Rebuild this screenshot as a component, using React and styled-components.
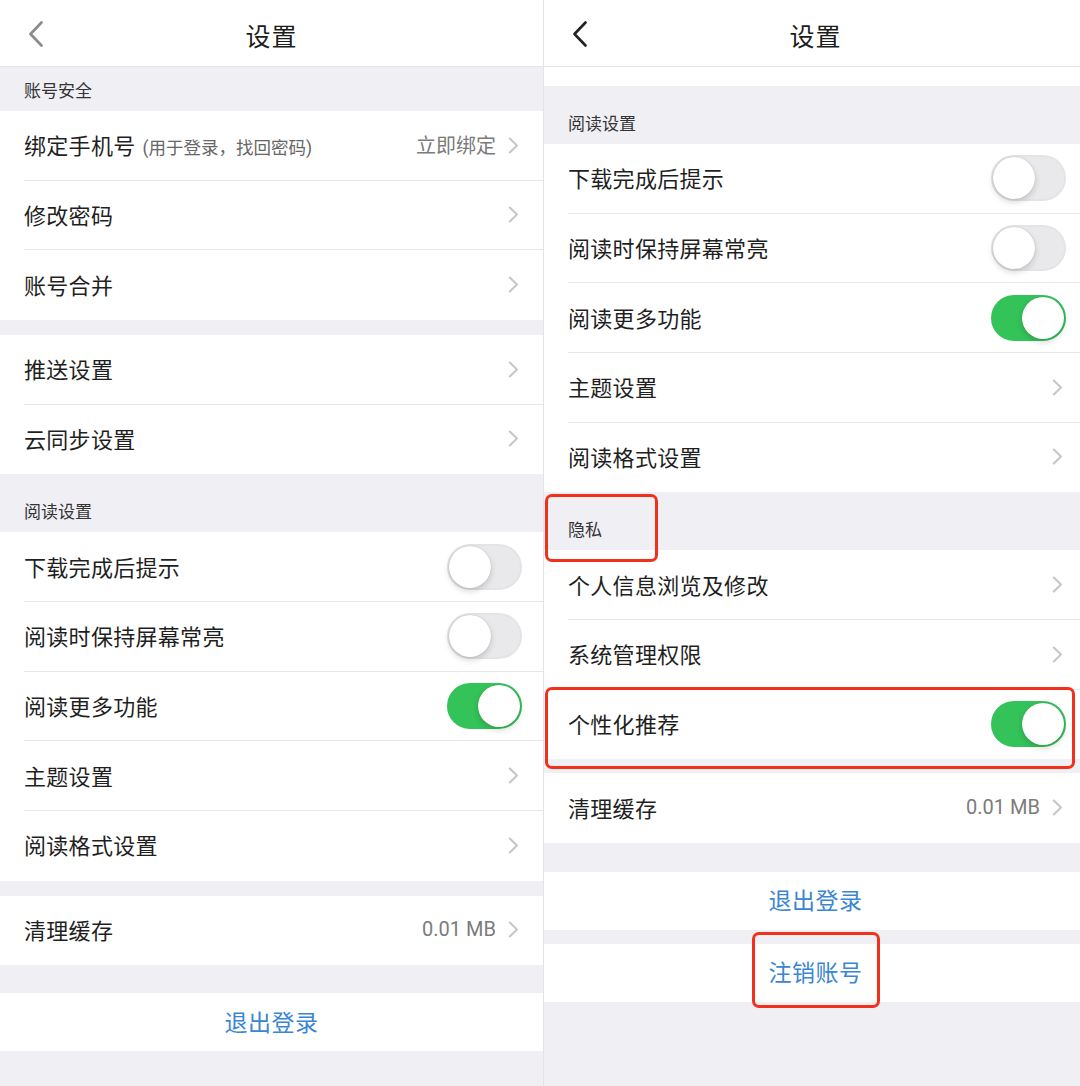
import React from "react";
import styled, { createGlobalStyle } from "styled-components";

const GlobalStyle = createGlobalStyle`
  html, body {
    margin: 0;
    padding: 0;
    background: #efeff4;
  }
  * {
    box-sizing: border-box;
  }
  body {
    font-family: Roboto, "Noto Sans CJK SC", sans-serif;
    -webkit-font-smoothing: antialiased;
  }
`;

const Page = styled.div`
  display: flex;
  gap: 1px;
  width: 1080px;
  height: 1086px;
  overflow: hidden;
  background: #e4e4e8;
`;

const Phone = styled.section`
  flex: 0 0 543px;
  height: 100%;
  display: flex;
  flex-direction: column;
  background: #efeff4;
  overflow: hidden;
`;

const NavBar = styled.header`
  flex: 0 0 67px;
  display: grid;
  grid-template-columns: 72px 1fr 72px;
  align-items: center;
  background: #ffffff;
  border-bottom: 1px solid #e6e6ea;
`;

const Back = styled.div`
  display: flex;
  align-items: center;
  padding-left: 28px;
  padding-top: 2px;
  color: ${(p) => (p.$dark ? "#222222" : "#8a8a8a")};
`;

const Title = styled.h1`
  margin: 0;
  padding-top: 4px;
  text-align: center;
  font-size: 25px;
  font-weight: 400;
  color: #1c1c1c;
  letter-spacing: 1px;
`;

const Gap = styled.div`
  flex: 0 0 ${(p) => p.$h}px;
`;

const Tail = styled.div`
  flex: 0 0 19px;
  background: #ffffff;
`;

const Header = styled.div`
  position: relative;
  flex: 0 0 44px;
  display: flex;
  align-items: center;
  padding-left: 24px;
  font-size: 17px;
  color: #333333;
`;

const Group = styled.div`
  background: #ffffff;
  display: flex;
  flex-direction: column;
`;

const Row = styled.div`
  position: relative;
  height: 69.67px;
  padding-left: 24px;
  background: #ffffff;
`;

const RowInner = styled.div`
  height: 100%;
  display: flex;
  align-items: center;
  padding-right: 24px;
  border-bottom: 1px solid #e8e8ea;

  ${Row}:last-child & {
    border-bottom-color: transparent;
  }
`;

const Label = styled.span`
  flex: 1;
  padding-bottom: 2px;
  font-size: 22px;
  letter-spacing: 0.3px;
  color: #1f1f1f;
  white-space: nowrap;
`;

const Note = styled.span`
  margin-left: 7px;
  font-size: 17.5px;
  letter-spacing: 0;
  color: #666666;
`;

const Value = styled.span`
  padding-bottom: 1px;
  font-size: 20px;
  color: #7b7b7b;
  margin-right: 12px;
`;

const Chevron = styled.svg`
  display: block;
  flex: 0 0 auto;
`;

const Switch = styled.div`
  width: 75px;
  height: 46px;
  margin-right: -3px;
  border-radius: 23px;
  background: ${(p) => (p.$on ? "#34c359" : "#e9e9eb")};
  border: 2px solid ${(p) => (p.$on ? "#34c359" : "#e4e4e6")};
  display: flex;
  justify-content: ${(p) => (p.$on ? "flex-end" : "flex-start")};
  align-items: center;
`;

const Knob = styled.div`
  width: 42px;
  height: 42px;
  border-radius: 50%;
  background: #ffffff;
  box-shadow: 0 3px 6px rgba(0, 0, 0, 0.16), 0 0 1px rgba(0, 0, 0, 0.25);
`;

const Action = styled.div`
  position: relative;
  flex: 0 0 58px;
  display: flex;
  align-items: center;
  justify-content: center;
  padding-bottom: 3px;
  background: #ffffff;
  font-size: 23px;
  color: #3a86d2;
  letter-spacing: 0.5px;
`;

const Mark = styled.div`
  position: absolute;
  top: ${(p) => p.$top}px;
  left: ${(p) => p.$left}px;
  width: ${(p) => p.$w}px;
  height: ${(p) => p.$h}px;
  border: 3px solid #f2301c;
  border-radius: 7px;
  pointer-events: none;
  z-index: 2;
`;

function BackIcon() {
  return (
    <svg width="16" height="26" viewBox="0 0 16 26">
      <polyline
        points="13.5,1.5 2.5,13 13.5,24.5"
        fill="none"
        stroke="currentColor"
        strokeWidth="2.6"
        strokeLinecap="round"
        strokeLinejoin="round"
      />
    </svg>
  );
}

function Arrow() {
  return (
    <Chevron width="11" height="17" viewBox="0 0 11 17">
      <polyline
        points="1.8,1.5 9,8.5 1.8,15.5"
        fill="none"
        stroke="#c6c6c9"
        strokeWidth="2.1"
        strokeLinecap="round"
        strokeLinejoin="round"
      />
    </Chevron>
  );
}

function Cell({ title, note, value, toggle, mark }) {
  return (
    <Row>
      <RowInner>
        <Label>
          {title}
          {note && <Note>{note}</Note>}
        </Label>
        {value && <Value>{value}</Value>}
        {toggle === undefined ? (
          <Arrow />
        ) : (
          <Switch $on={toggle}>
            <Knob />
          </Switch>
        )}
      </RowInner>
      {mark}
    </Row>
  );
}

function Nav({ dark }) {
  return (
    <NavBar>
      <Back $dark={dark}>
        <BackIcon />
      </Back>
      <Title>设置</Title>
      <div />
    </NavBar>
  );
}

function ReadingGroup() {
  return (
    <Group>
      <Cell title="下载完成后提示" toggle={false} />
      <Cell title="阅读时保持屏幕常亮" toggle={false} />
      <Cell title="阅读更多功能" toggle={true} />
      <Cell title="主题设置" />
      <Cell title="阅读格式设置" />
    </Group>
  );
}

export default function App() {
  return (
    <>
      <GlobalStyle />
      <Page>
        <Phone>
          <Nav />
          <Header>账号安全</Header>
          <Group>
            <Cell title="绑定手机号" note="(用于登录，找回密码)" value="立即绑定" />
            <Cell title="修改密码" />
            <Cell title="账号合并" />
          </Group>
          <Gap $h={15} />
          <Group>
            <Cell title="推送设置" />
            <Cell title="云同步设置" />
          </Group>
          <Gap $h={14} />
          <Header>阅读设置</Header>
          <ReadingGroup />
          <Gap $h={15} />
          <Group>
            <Cell title="清理缓存" value="0.01 MB" />
          </Group>
          <Gap $h={28} />
          <Action>退出登录</Action>
        </Phone>

        <Phone>
          <Nav dark />
          <Tail />
          <Gap $h={14} />
          <Header>阅读设置</Header>
          <ReadingGroup />
          <Gap $h={14} />
          <Header>
            隐私
            <Mark $top={-12} $left={1} $w={113} $h={68} />
          </Header>
          <Group>
            <Cell title="个人信息浏览及修改" />
            <Cell title="系统管理权限" />
            <Cell
              title="个性化推荐"
              toggle={true}
              mark={<Mark $top={-3} $left={1} $w={530} $h={82} />}
            />
          </Group>
          <Gap $h={14} />
          <Group>
            <Cell title="清理缓存" value="0.01 MB" />
          </Group>
          <Gap $h={29} />
          <Action>退出登录</Action>
          <Gap $h={14} />
          <Action>
            注销账号
            <Mark $top={-12} $left={208} $w={128} $h={76} />
          </Action>
        </Phone>
      </Page>
    </>
  );
}
